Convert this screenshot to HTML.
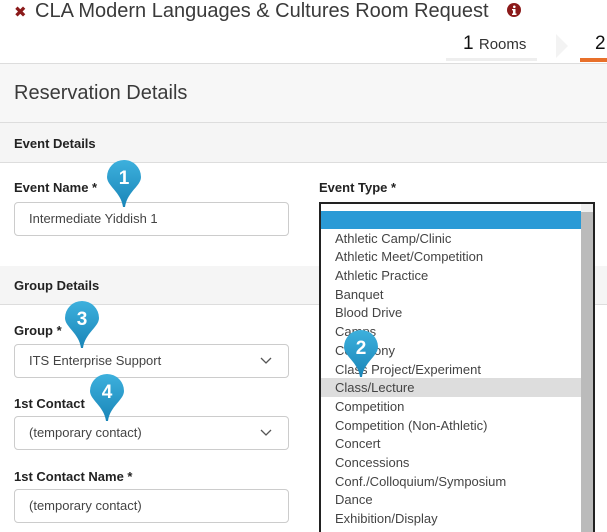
<!DOCTYPE html>
<html><head><style>
*{margin:0;padding:0;box-sizing:border-box}
html,body{width:607px;height:532px;overflow:hidden}
body{background:#fff;font-family:"Liberation Sans","DejaVu Sans",sans-serif;color:#333;position:relative}
.a{position:absolute}
.lbl{position:absolute;left:14px;font-size:13px;font-weight:bold;color:#222}
.inp{position:absolute;left:14px;width:275px;height:34px;border:1px solid #ccc;border-radius:4px;background:#fff;font-size:13px;color:#444;padding-left:14px;line-height:32px}
.chev{position:absolute;right:16px;top:12px}
.dd{position:absolute;left:319px;top:202px;width:276px;height:345px;border:2px solid #222;background:#fff;overflow:hidden}
.it{position:absolute;left:14px;font-size:13px;color:#444;line-height:18px}
.pin{position:absolute;width:36px;height:50px}
</style></head><body>
<div class="a" style="left:14px;top:3px;font-size:15px;color:#8b1a1a;font-weight:bold">✖</div>
<div class="a" style="left:35px;top:0px;font-size:20px;color:#3a3a3a;white-space:nowrap">CLA Modern Languages &amp; Cultures Room Request</div>
<svg class="a" style="left:507px;top:3px" width="14" height="14"><circle cx="7" cy="7" r="7" fill="#8b1a1a"/><rect x="6" y="6" width="2.5" height="5" fill="#fff"/><rect x="5" y="10.5" width="4.5" height="1.5" fill="#fff"/><rect x="5" y="6" width="3" height="1.3" fill="#fff"/><circle cx="7.3" cy="3.8" r="1.3" fill="#fff"/></svg>
<div class="a" style="left:446px;top:33px;width:91px;height:28px;border-bottom:3px solid #eee;font-size:19px;color:#111;padding-left:17px">1 <span style="font-size:15px;color:#333">Rooms</span></div>
<svg class="a" style="left:556px;top:34px" width="14" height="24"><polygon points="0,0 12,12 0,24" fill="#f3f3f3"/></svg>
<div class="a" style="left:595px;top:33px;font-size:19px;color:#111">2</div>
<div class="a" style="left:580px;top:58px;width:27px;height:4px;background:#e8702a"></div>
<div class="a" style="left:0;top:63px;width:607px;height:60px;background:#f7f7f7;border-top:1px solid #ddd;border-bottom:1px solid #ddd"></div>
<div class="a" style="left:14px;top:82px;font-size:20px;color:#3a3a3a">Reservation Details</div>
<div class="a" style="left:0;top:123px;width:607px;height:40px;background:#f5f5f5;border-bottom:1px solid #ddd"></div>
<div class="lbl" style="top:136px">Event Details</div>
<div class="lbl" style="top:180px">Event Name *</div>
<div class="inp" style="top:202px">Intermediate Yiddish 1</div>
<div class="a" style="left:0;top:266px;width:607px;height:39px;background:#f5f5f5;border-bottom:1px solid #ddd"></div>
<div class="lbl" style="top:278px">Group Details</div>
<div class="lbl" style="top:323px">Group *</div>
<div class="inp" style="top:344px">ITS Enterprise Support<svg class="chev" width="12" height="8"><path d="M1 1L6 6L11 1" fill="none" stroke="#555" stroke-width="1.3"/></svg></div>
<div class="lbl" style="top:396px">1st Contact</div>
<div class="inp" style="top:416px">(temporary contact)<svg class="chev" width="12" height="8"><path d="M1 1L6 6L11 1" fill="none" stroke="#555" stroke-width="1.3"/></svg></div>
<div class="lbl" style="top:469px">1st Contact Name *</div>
<div class="inp" style="top:489px">(temporary contact)</div>
<div class="a" style="left:319px;top:180px;font-size:13px;font-weight:bold;color:#222">Event Type *</div>
<div class="dd">
<div class="a" style="left:0;top:7px;width:260px;height:18px;background:#2a9ad6"></div>
<div class="a" style="left:260px;top:0;width:13px;height:345px;background:#bbb"></div>
<div class="a" style="left:260px;top:0;width:13px;height:8px;background:#f0f0f0"></div>
<div class="a" style="left:0;top:174px;width:260px;height:19px;background:#ddd"></div>
<div class="it" style="top:26px">Athletic Camp/Clinic</div>
<div class="it" style="top:44px">Athletic Meet/Competition</div>
<div class="it" style="top:63px">Athletic Practice</div>
<div class="it" style="top:82px">Banquet</div>
<div class="it" style="top:100px">Blood Drive</div>
<div class="it" style="top:119px">Camps</div>
<div class="it" style="top:138px">Ceremony</div>
<div class="it" style="top:157px">Class Project/Experiment</div>
<div class="it" style="top:175px">Class/Lecture</div>
<div class="it" style="top:194px">Competition</div>
<div class="it" style="top:213px">Competition (Non-Athletic)</div>
<div class="it" style="top:231px">Concert</div>
<div class="it" style="top:250px">Concessions</div>
<div class="it" style="top:269px">Conf./Colloquium/Symposium</div>
<div class="it" style="top:287px">Dance</div>
<div class="it" style="top:306px">Exhibition/Display</div>
</div>
<svg width="0" height="0" style="position:absolute"><defs><linearGradient id="g" x1="0" y1="0" x2="0" y2="1"><stop offset="0" stop-color="#3db0dd"/><stop offset="1" stop-color="#1a86b8"/></linearGradient></defs></svg>
<svg class="pin" style="left:106px;top:159px" viewBox="0 0 36 50"><path d="M18 1A17 17 0 0 1 35 18C35 27 21 33 19 48L17 48C15 33 1 27 1 18A17 17 0 0 1 18 1Z" fill="url(#g)"/><text x="18" y="25" text-anchor="middle" font-size="19" font-weight="bold" fill="#fff" font-family="Liberation Sans">1</text></svg>
<svg class="pin" style="left:343px;top:329px" viewBox="0 0 36 50"><path d="M18 1A17 17 0 0 1 35 18C35 27 21 33 19 48L17 48C15 33 1 27 1 18A17 17 0 0 1 18 1Z" fill="url(#g)"/><text x="18" y="25" text-anchor="middle" font-size="19" font-weight="bold" fill="#fff" font-family="Liberation Sans">2</text></svg>
<svg class="pin" style="left:64px;top:300px" viewBox="0 0 36 50"><path d="M18 1A17 17 0 0 1 35 18C35 27 21 33 19 48L17 48C15 33 1 27 1 18A17 17 0 0 1 18 1Z" fill="url(#g)"/><text x="18" y="25" text-anchor="middle" font-size="19" font-weight="bold" fill="#fff" font-family="Liberation Sans">3</text></svg>
<svg class="pin" style="left:89px;top:373px" viewBox="0 0 36 50"><path d="M18 1A17 17 0 0 1 35 18C35 27 21 33 19 48L17 48C15 33 1 27 1 18A17 17 0 0 1 18 1Z" fill="url(#g)"/><text x="18" y="25" text-anchor="middle" font-size="19" font-weight="bold" fill="#fff" font-family="Liberation Sans">4</text></svg>
</body></html>
